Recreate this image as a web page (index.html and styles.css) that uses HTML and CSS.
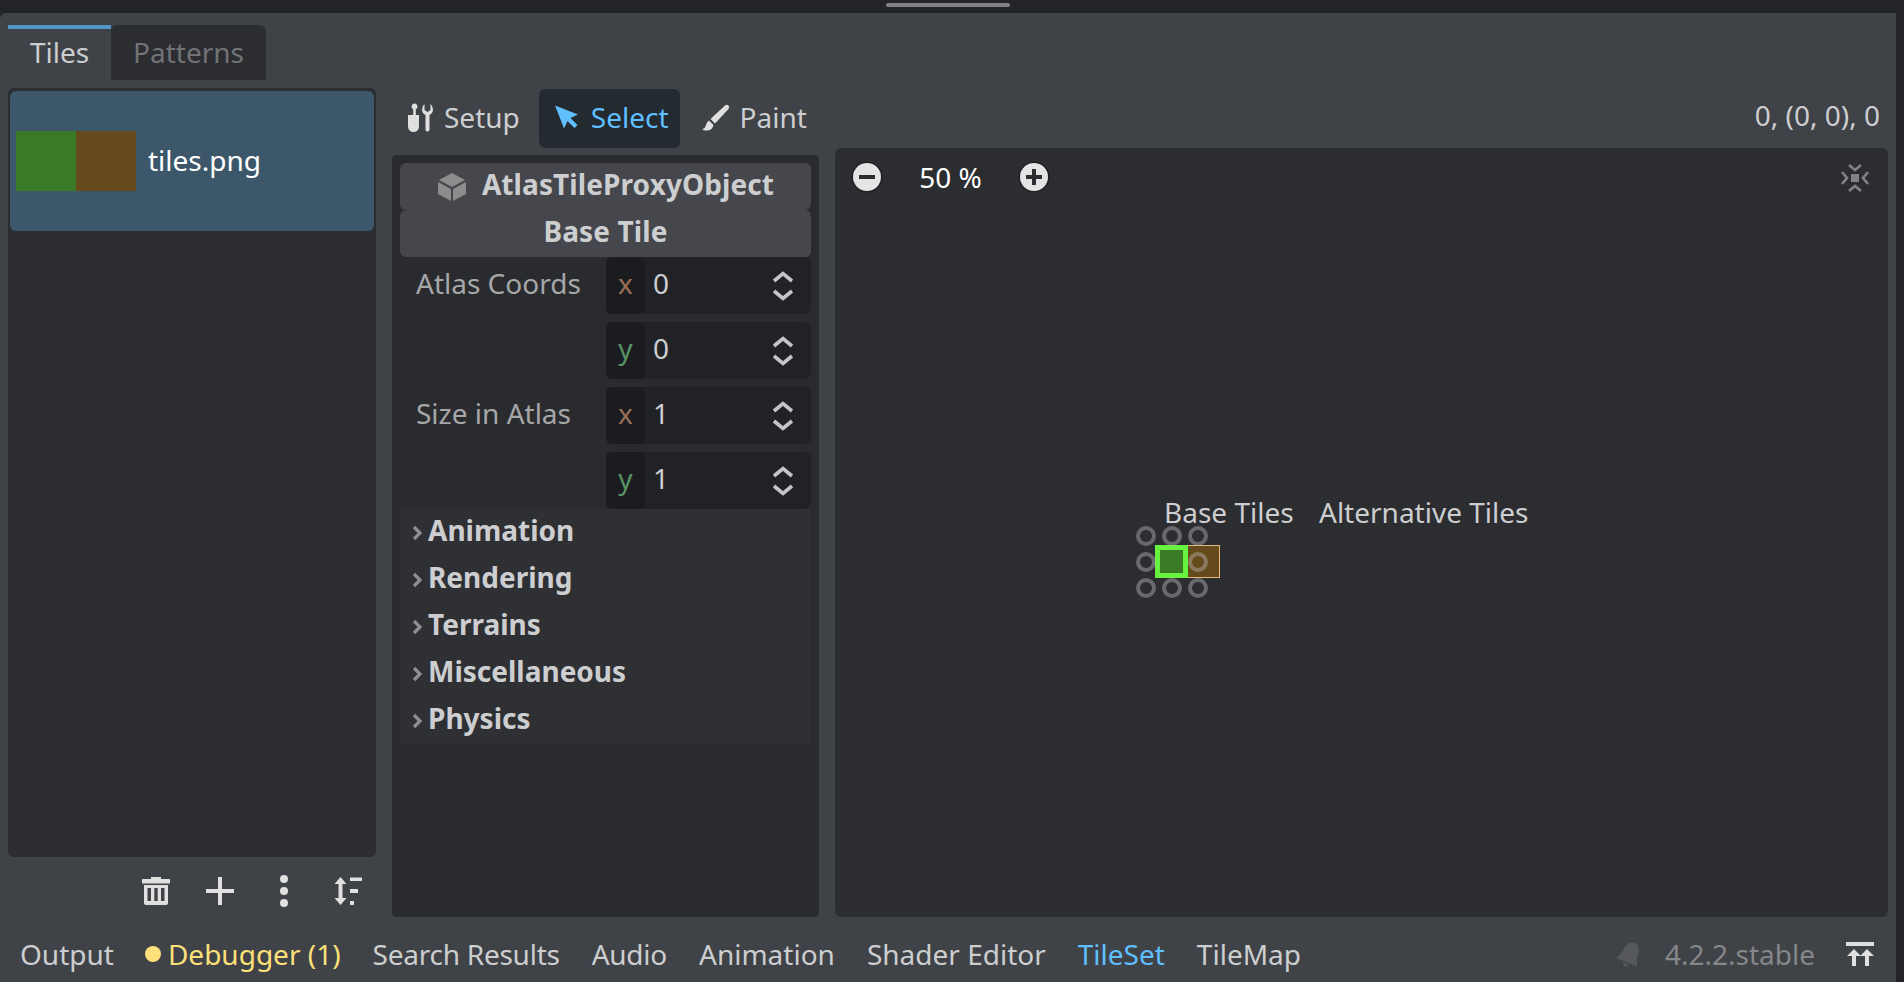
FILE: index.html
```html
<!DOCTYPE html>
<html lang="en">
<head>
    <meta charset="UTF-8">
    <title>TileSet editor</title>
    <link rel="stylesheet" href="styles.css">
</head>
<body>
    <div class="grab-bar"><span class="grab-handle"></span></div>
    <div class="dock">
        <div class="tabs">
            <div class="tab tab-active">Tiles</div>
            <div class="tab tab-off">Patterns</div>
        </div>

        <div class="editor">
            <div class="sources">
                <div class="source-list">
                    <div class="source-item">
                        <span class="thumb"><i class="thumb-green"></i><i class="thumb-brown"></i></span>
                        <span class="lift">tiles.png</span>
                    </div>
                </div>
                <div class="source-tools">
                    <svg class="tool-icon" viewBox="0 0 30 30"><path fill="#e0e0e0" fill-rule="evenodd" d="M10 1h10v2h9v4.500H1V3h9zM3 9h24v18q0 2-2 2H5q-2 0-2-2zM6.500 12v13H10V12zM13.300 12v13h3.400V12zM20 12v13h3.500V12z"/></svg>
                    <svg class="tool-icon" viewBox="0 0 30 30"><path fill="#e0e0e0" d="M13 1h4v12h12v4H17v12h-4V17H1v-4h12z"/></svg>
                    <svg class="tool-icon" viewBox="0 0 30 30"><circle fill="#e0e0e0" cx="15" cy="3" r="4"/><circle fill="#e0e0e0" cx="15" cy="15" r="4"/><circle fill="#e0e0e0" cx="15" cy="27" r="4"/></svg>
                    <svg class="tool-icon" viewBox="0 0 30 30"><path fill="#e0e0e0" d="M7.500 1l6 7h-4v14h4l-6 7-6-7h4V8h-4zM17 1.500h12V5H17zM17 13h8v4h-8zM17 25h4v4h-4z"/></svg>
                </div>
            </div>

            <div class="atlas">
                <div class="toolbar">
                    <div class="tool">
                        <svg class="tool-glyph" viewBox="0 0 28 32"><path fill="#e0e0e0" d="M8.200 7.200V13H3v11.500a5.500 5.500 0 0 0 11 0V13h-3.200V7.200a3 3 0 1 0-2.600 0zM19.500 2v6l3 2 3-2V2q2.500 2 2.500 5.500 0 3.500-3.500 5.500v14.500q0 2-2 2t-2-2V13Q17 11 17 7.500T19.500 2z"/></svg>
                        <span class="lift">Setup</span>
                    </div>
                    <div class="tool tool-on">
                        <svg class="tool-glyph" viewBox="0 0 28 32"><path fill="#5fbfff" d="M3 3.500l23 9-7.500 3.500 7 7-3 3-7-7-3.500 7.500z"/></svg>
                        <span class="lift">Select</span>
                    </div>
                    <div class="tool">
                        <svg class="tool-glyph" viewBox="0 0 28 32"><path fill="#e0e0e0" d="M24 3.500q2-1.500 3.500 0t0 3.500L14 21.500 9.500 17zM8 18.500l4.500 4.500q-1 5-6 5.500-4 .5-5-1.500 3-1 3.500-4 .5-3 3-4.500z"/></svg>
                        <span class="lift">Paint</span>
                    </div>
                    <div class="status">0, (0, 0), 0</div>
                </div>

                <div class="panes">
                    <div class="inspector">
                        <div class="head">
                            <svg class="cube" viewBox="0 0 30 30"><path fill="#8c8c8c" d="M15 1l13 7-13 7L2 8zM1 10l13 7v12L1 22zM29 10v12l-13 7V17z"/></svg>
                            <span class="lift">AtlasTileProxyObject</span>
                        </div>
                        <div class="head"><span class="lift">Base Tile</span></div>

                        <div class="props">
                            <div class="prop">
                                <div class="prop-name">Atlas Coords</div>
                                <div class="fields">
                                    <div class="field"><span class="axis axis-x"><span class="lift">x</span></span><span class="val lift">0</span><svg class="spin" viewBox="0 0 22 30"><path d="M2 10l9-7.500 9 7.500M2 20l9 7.500 9-7.500"/></svg></div>
                                    <div class="field"><span class="axis axis-y"><span class="lift">y</span></span><span class="val lift">0</span><svg class="spin" viewBox="0 0 22 30"><path d="M2 10l9-7.500 9 7.500M2 20l9 7.500 9-7.500"/></svg></div>
                                </div>
                            </div>
                            <div class="prop">
                                <div class="prop-name">Size in Atlas</div>
                                <div class="fields">
                                    <div class="field"><span class="axis axis-x"><span class="lift">x</span></span><span class="val lift">1</span><svg class="spin" viewBox="0 0 22 30"><path d="M2 10l9-7.500 9 7.500M2 20l9 7.500 9-7.500"/></svg></div>
                                    <div class="field"><span class="axis axis-y"><span class="lift">y</span></span><span class="val lift">1</span><svg class="spin" viewBox="0 0 22 30"><path d="M2 10l9-7.500 9 7.500M2 20l9 7.500 9-7.500"/></svg></div>
                                </div>
                            </div>
                        </div>

                        <div class="section"><svg class="arrow" viewBox="0 0 10 16"><path d="M2 2l6 6-6 6"/></svg><span class="lift">Animation</span></div>
                        <div class="section"><svg class="arrow" viewBox="0 0 10 16"><path d="M2 2l6 6-6 6"/></svg><span class="lift">Rendering</span></div>
                        <div class="section"><svg class="arrow" viewBox="0 0 10 16"><path d="M2 2l6 6-6 6"/></svg><span class="lift">Terrains</span></div>
                        <div class="section"><svg class="arrow" viewBox="0 0 10 16"><path d="M2 2l6 6-6 6"/></svg><span class="lift">Miscellaneous</span></div>
                        <div class="section"><svg class="arrow" viewBox="0 0 10 16"><path d="M2 2l6 6-6 6"/></svg><span class="lift">Physics</span></div>
                    </div>

                    <div class="viewport">
                        <div class="zoom-row">
                            <svg class="zoom-btn" viewBox="0 0 32 32"><circle cx="16" cy="16" r="15.500" fill="#1f2024"/><circle cx="16" cy="16" r="14" fill="#e4e4e4"/><path fill="#2c2d31" d="M8 14h16v4H8z"/></svg>
                            <span class="zoom-text">50 %</span>
                            <svg class="zoom-btn" viewBox="0 0 32 32"><circle cx="16" cy="16" r="15.500" fill="#1f2024"/><circle cx="16" cy="16" r="14" fill="#e4e4e4"/><path fill="#2c2d31" d="M14 8h4v6h6v4h-6v6h-4v-6H8v-4h6z"/></svg>
                        </div>
                        <svg class="center-btn" viewBox="0 0 30 30"><path fill="#808286" d="M11 11h8v8h-8z"/><path fill="none" stroke="#808286" stroke-width="2.600" d="M9 2l6 5 6-5M9 28l6-5 6 5M2 9l5 6-5 6M28 9l-5 6 5 6"/></svg>
                        <span class="atlas-label label-base">Base Tiles</span>
                        <span class="atlas-label label-alt">Alternative Tiles</span>
                        <div class="tile-sheet"></div>
                        <div class="tile-sel"></div>
                        <svg class="handles" viewBox="0 0 84 84"><g fill="none" stroke="#bdbdbd" stroke-opacity=".42" stroke-width="4"><circle cx="16" cy="16" r="8"/><circle cx="42" cy="16" r="8"/><circle cx="68" cy="16" r="8"/><circle cx="16" cy="42" r="8"/><circle cx="68" cy="42" r="8"/><circle cx="16" cy="68" r="8"/><circle cx="42" cy="68" r="8"/><circle cx="68" cy="68" r="8"/></g></svg>
                    </div>
                </div>
            </div>
        </div>

        <div class="bottom-bar">
            <span class="bottom-tab">Output</span>
            <span class="bottom-tab tab-warn"><i class="warn-dot"></i>Debugger (1)</span>
            <span class="bottom-tab tab-tight">Search Results</span>
            <span class="bottom-tab tab-tight">Audio</span>
            <span class="bottom-tab">Animation</span>
            <span class="bottom-tab">Shader Editor</span>
            <span class="bottom-tab tab-current">TileSet</span>
            <span class="bottom-tab">TileMap</span>
            <span class="bottom-right">
                <svg class="bell" viewBox="0 0 30 30"><path fill="#55575b" transform="rotate(22 15 15)" d="M15 3q6 0 7 6l1.500 8q.5 3 2.500 5v2H4v-2q2-2 2.500-5L8 9q1-6 7-6zM12 25.500h6q0 3-3 3t-3-3z"/></svg>
                <span class="version">4.2.2.stable</span>
                <svg class="expand" viewBox="0 0 28 24"><path fill="#e0e0e0" d="M0 0h28v4H0zM8 7l7 7h-5v10H6V14H1zM21 7l7 7h-5v10h-4V14h-5z"/></svg>
            </span>
        </div>
    </div>
</body>
</html>
```

FILE: styles.css
```css
* {
    box-sizing: border-box;
}
body {
    margin: 0;
    height: 982px;
    overflow: hidden;
    background-color: #232428;
    font-family: "Noto Sans", sans-serif;
    font-size: 28px;
    line-height: 38px;
    color: #cdced0;
}
svg {
    display: block;
    flex: none;
    overflow: visible;
}
.lift {
    margin-bottom: 5px;
}
.tool .lift,
.source-item .lift {
    margin-bottom: 3px;
}

.grab-bar {
    width: 1896px;
    height: 13px;
    display: flex;
    justify-content: center;
    padding-top: 3px;
}
.grab-handle {
    width: 124px;
    height: 4px;
    border-radius: 2px;
    background-color: #808184;
}

.dock {
    width: 1896px;
    height: 969px;
    padding: 12px 8px 0;
    display: flex;
    flex-direction: column;
    background-color: #3f4246;
    border-top-left-radius: 6px;
}

.tabs {
    display: flex;
    height: 55px;
}
.tab {
    display: flex;
    align-items: center;
    justify-content: center;
}
.tab-active {
    width: 103px;
    padding-bottom: 6px;
    border-top: 4px solid #4f96c7;
}
.tab-off {
    width: 155px;
    padding-bottom: 2px;
    background-color: #2c2d31;
    color: #727376;
    border-radius: 6px 6px 0 0;
}

.editor {
    flex: none;
    height: 829px;
    margin-top: 8px;
    display: flex;
    gap: 16px;
}

.sources {
    width: 368px;
    display: flex;
    flex-direction: column;
}
.source-list {
    height: 769px;
    padding: 3px 2px;
    background-color: #2c2d31;
    border-radius: 6px;
}
.source-item {
    height: 140px;
    padding-left: 6px;
    display: flex;
    align-items: center;
    gap: 12px;
    background-color: #3c566a;
    border-radius: 6px;
    color: #fff;
}
.thumb {
    display: flex;
}
.thumb i {
    width: 60px;
    height: 60px;
}
.thumb-green {
    background-color: #3a7a26;
}
.thumb-brown {
    background-color: #654a1c;
}
.source-tools {
    flex: 1;
    display: flex;
    justify-content: flex-end;
    align-items: center;
    gap: 34px;
    padding: 8px 13px 0 0;
}
.tool-icon {
    width: 30px;
    height: 30px;
}

.atlas {
    flex: 1;
    display: flex;
    flex-direction: column;
}
.toolbar {
    height: 60px;
    display: flex;
    align-items: center;
    gap: 8px;
}
.tool {
    height: 59px;
    padding: 0 11px 0 13px;
    display: flex;
    align-items: center;
    gap: 11px;
    border-radius: 6px;
}
.tool-glyph {
    width: 28px;
    height: 32px;
}
.tool-on {
    background-color: #232a30;
    color: #5fbfff;
}
.status {
    margin-left: auto;
    padding: 0 8px 6px 0;
}

.panes {
    flex: 1;
    display: flex;
    gap: 16px;
}

.inspector {
    width: 427px;
    margin-top: 7px;
    padding: 8px;
    background-color: #2a2b2f;
    border-radius: 4px;
}
.head {
    height: 47px;
    display: flex;
    align-items: center;
    justify-content: center;
    gap: 15px;
    background-color: #45474c;
    border-radius: 6px;
    font-weight: 700;
    letter-spacing: .1px;
}
.cube {
    width: 30px;
    height: 30px;
}

.props {
    display: flex;
    flex-direction: column;
    gap: 8px;
}
.prop {
    display: flex;
    height: 122px;
}
.prop-name {
    width: 206px;
    padding: 7px 0 0 16px;
    color: #a6a7a9;
}
.fields {
    flex: 1;
    display: flex;
    flex-direction: column;
    gap: 8px;
}
.field {
    flex: 1;
    display: flex;
    align-items: center;
    padding-right: 17px;
    background-color: #212226;
    border-radius: 6px;
}
.axis {
    width: 39px;
    height: 100%;
    display: flex;
    align-items: center;
    justify-content: center;
    background-color: #1b1c1f;
    border-radius: 6px;
}
.axis-x {
    color: #9a6f58;
}
.axis-y {
    color: #569464;
}
.val {
    flex: 1;
    padding-left: 8px;
}
.spin {
    width: 22px;
    height: 30px;
}
.spin path {
    fill: none;
    stroke: #c4c5c7;
    stroke-width: 3.600;
}

.section {
    height: 47px;
    display: flex;
    align-items: center;
    background-color: #2f3034;
    font-weight: 700;
}
.arrow {
    width: 10px;
    height: 16px;
    margin: 0 6px 0 12px;
}
.arrow path {
    fill: none;
    stroke: #8e8f91;
    stroke-width: 3.200;
}

.viewport {
    flex: 1;
    position: relative;
    background-color: #2c2d31;
    border-radius: 6px;
}
.zoom-row {
    position: absolute;
    left: 16px;
    top: 13px;
    display: flex;
    align-items: center;
}
.zoom-btn {
    width: 32px;
    height: 32px;
}
.zoom-text {
    width: 135px;
    line-height: 32px;
    text-align: center;
    color: #fff;
}
.center-btn {
    position: absolute;
    right: 18px;
    top: 15px;
    width: 30px;
    height: 30px;
}
.atlas-label {
    position: absolute;
    top: 345px;
}
.label-base {
    left: 329px;
}
.label-alt {
    left: 484px;
}
.tile-sheet {
    position: absolute;
    left: 320px;
    top: 397px;
    width: 65px;
    height: 33px;
    background-color: #654a1c;
    border: 1px solid #e8b97c;
}
.tile-sel {
    position: absolute;
    left: 320px;
    top: 397px;
    width: 33px;
    height: 33px;
    background-color: #3a7a26;
    border: 5px solid #66f23f;
}
.handles {
    position: absolute;
    left: 295px;
    top: 372px;
    width: 84px;
    height: 84px;
}

.bottom-bar {
    flex: 1;
    display: flex;
    align-items: center;
    padding: 8px 0 0 12px;
    gap: 32px;
}
.tab-warn {
    display: flex;
    align-items: center;
    color: #fde07a;
}
.warn-dot {
    width: 16px;
    height: 16px;
    margin: 0 7px 0 -1px;
    border-radius: 50%;
    background-color: #fde07a;
}
.tab-tight {
    letter-spacing: -.25px;
}
.tab-current {
    color: #5fbfff;
}
.bottom-right {
    margin-left: auto;
    display: flex;
    align-items: center;
    padding-right: 14px;
}
.bell {
    width: 30px;
    height: 30px;
}
.version {
    margin-left: 20px;
    color: #86878a;
}
.expand {
    width: 28px;
    height: 24px;
    margin-left: 31px;
}
```
